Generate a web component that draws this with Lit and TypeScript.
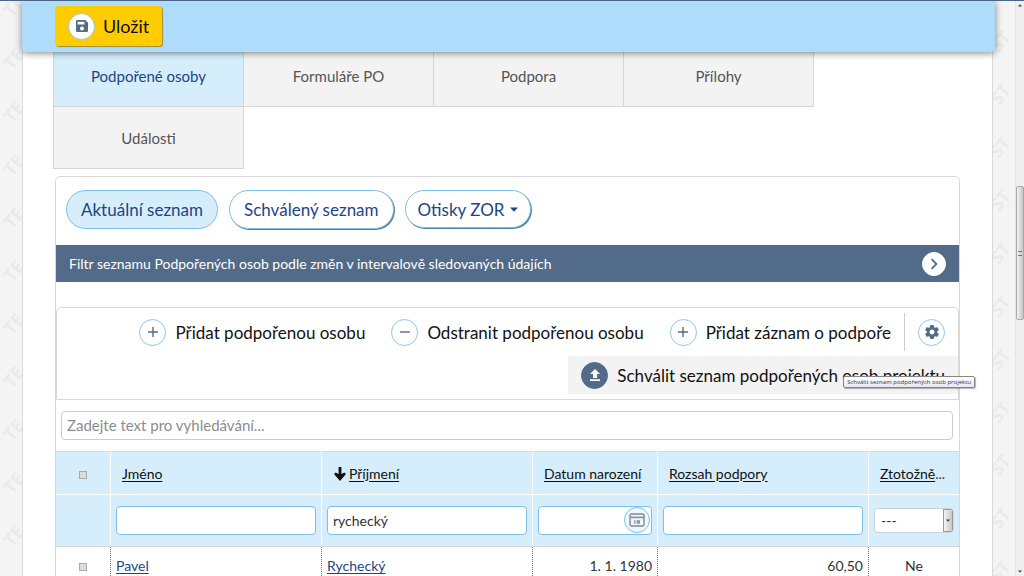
import { LitElement, html, css, svg } from "lit";
import { customElement, property } from "lit/decorators.js";

type IconName = "save" | "plus" | "minus" | "gear" | "upload" | "chevron" | "calendar" | "caret" | "arrow";

const ICONS: Record<IconName, { box: string; body: unknown }> = {
  save: {
    box: "0 0 14 14",
    body: svg`<path fill-rule="evenodd" d="M2.2 1H10.3L13 3.7V11.8A1.2 1.2 0 0 1 11.8 13H2.2A1.2 1.2 0 0 1 1 11.8V2.2A1.2 1.2 0 0 1 2.2 1ZM2.6 2.8V5.6H9.4V2.8ZM7 7.6A2 2 0 1 0 7 11.6A2 2 0 1 0 7 7.6Z"/>`,
  },
  plus: { box: "0 0 14 14", body: svg`<path d="M6.3 2H7.7V6.3H12V7.7H7.7V12H6.3V7.7H2V6.3H6.3Z"/>` },
  minus: { box: "0 0 14 14", body: svg`<path d="M2 6.3H12V7.7H2Z"/>` },
  gear: {
    box: "2 2 20 20",
    body: svg`<path d="M19.43 12.98c.04-.32.07-.64.07-.98s-.03-.66-.07-.98l2.11-1.65c.19-.15.24-.42.12-.64l-2-3.46c-.12-.22-.39-.3-.61-.22l-2.49 1c-.52-.4-1.08-.73-1.69-.98l-.38-2.65C14.46 2.18 14.25 2 14 2h-4c-.25 0-.46.18-.49.42l-.38 2.65c-.61.25-1.17.59-1.69.98l-2.49-1c-.23-.09-.49 0-.61.22l-2 3.46c-.13.22-.07.49.12.64l2.11 1.65c-.04.32-.07.65-.07.98s.03.66.07.98l-2.11 1.65c-.19.15-.24.42-.12.64l2 3.46c.12.22.39.3.61.22l2.49-1c.52.4 1.08.73 1.69.98l.38 2.65c.03.24.24.42.49.42h4c.25 0 .46-.18.49-.42l.38-2.65c.61-.25 1.17-.59 1.69-.98l2.49 1c.23.09.49 0 .61-.22l2-3.46c.12-.22.07-.49-.12-.64l-2.11-1.65zM12 15.5c-1.93 0-3.5-1.57-3.5-3.5s1.57-3.5 3.5-3.5 3.5 1.57 3.5 3.5-1.57 3.5-3.5 3.5z"/>`,
  },
  upload: { box: "0 0 14 14", body: svg`<path d="M7 1L12 6H9V10H5V6H2ZM2 11.2H12V13H2Z"/>` },
  chevron: { box: "0 0 14 14", body: svg`<path d="M4.6 2.2L9.4 7L4.6 11.8" fill="none" stroke="currentColor" stroke-width="1.8"/>` },
  calendar: {
    box: "0 0 16 14",
    body: svg`<rect x="1" y="1" width="14" height="12" rx="1.5" fill="none" stroke="currentColor" stroke-width="1.4"/><path d="M1 3.6H15V5.2H1ZM5 7.2H6.4V10.8H5ZM7.6 7.2H11V10.8H7.6Z" opacity=".85"/>`,
  },
  caret: { box: "0 0 8 5", body: svg`<path d="M0 .5H8L4 4.8Z"/>` },
  arrow: { box: "0 0 12 14", body: svg`<path d="M4.6 0H7.4V7L10.4 5.6L12 7L6 14L0 7L1.6 5.6L4.6 7Z"/>` },
};

@customElement("ui-icon")
export class UiIcon extends LitElement {
  static styles = css`
    :host { display: inline-flex; width: 14px; height: 14px; flex: none; vertical-align: -2px; }
    .glyph { width: 100%; height: 100%; fill: currentColor; display: block; }
  `;
  @property() name: IconName = "plus";
  render() {
    const icon = ICONS[this.name];
    return html`<svg class="glyph" viewBox=${icon.box} aria-hidden="true">${icon.body}</svg>`;
  }
}

@customElement("app-root")
export class AppRoot extends LitElement {
  static styles = css`
    :host {
      display: block;
      font-family: Lato, "Open Sans", sans-serif;
      font-size: 15px;
      color: #333;
    }
    * { box-sizing: border-box; }
    button, input, select { font: inherit; color: inherit; margin: 0; }
    button { cursor: pointer; }
    .window {
      display: flex;
      position: relative;
      height: 100vh;
      overflow: hidden;
      border-top: 1px solid #4a6583;
      background: #f4f4f4;
    }
    .gutter { width: 22px; flex: none; display: block; height: 100%; }
    .mark { font: bold 18px "Open Sans", sans-serif; fill: #eaeaea; }
    .page {
      flex: 1;
      min-width: 0;
      background: #fff;
      border: solid #d9d9d9;
      border-width: 0 1px;
    }
    .savebar {
      position: relative;
      z-index: 2;
      margin: 0 -3px 0 -1px;
      padding: 5px 33px 6px;
      background: #b0dcfb;
      border-radius: 0 0 4px 4px;
      box-shadow: 0 1px 7px rgba(0, 0, 0, 0.5);
    }
    .save {
      display: flex;
      align-items: center;
      gap: 8px;
      height: 40px;
      padding: 0 13px;
      border: 0;
      border-radius: 3px;
      background: #fc0;
      box-shadow: 1px 1px 1px #a58d2c;
      color: #111;
      font-size: 18px;
    }
    .disc {
      display: inline-flex;
      align-items: center;
      justify-content: center;
      flex: none;
      width: 27px;
      height: 27px;
      border: 1px solid #8cc6ef;
      border-radius: 50%;
      background: #fff;
      color: #526b89;
    }
    .disc.solid { background: #526b89; border-color: #526b89; color: #fff; }
    .disc.plain { width: 24px; height: 24px; padding: 0; border-color: #fff; }
    .body { padding: 0 32px 0 31px; }
    .tabs { display: flex; flex-wrap: wrap; margin: -7px 0 7px; }
    .tab {
      flex: 0 0 191px;
      height: 63px;
      margin: -1px 0 0 -1px;
      display: flex;
      align-items: center;
      justify-content: center;
      border: 1px solid #d5d5d5;
      background: #f3f3f3;
      color: #555;
      text-decoration: none;
    }
    .tab.current { background: #d6eefb; color: #1c4586; }
    .box { border: 1px solid #d8d8d8; border-radius: 5px; margin-left: 1px; }
    .pills { display: flex; align-items: flex-start; gap: 11px; padding: 13px 10px 16px; }
    .pill {
      display: flex;
      align-items: center;
      gap: 5px;
      height: 39px;
      padding: 0 14px;
      border: 1px solid #7cbfe9;
      border-radius: 20px;
      background: #fff;
      box-shadow: 1px 1px 0 #54809a;
      color: #1c4586;
      font-size: 17px;
    }
    .pill.on { background: #d6eefb; box-shadow: none; }
    .pill.menu { height: 38px; padding: 0 12px; }
    .small { width: 8px; height: 5px; }
    .filterbar {
      display: flex;
      align-items: center;
      justify-content: space-between;
      height: 37px;
      padding: 0 13px;
      background: #526b89;
      color: #fff;
      font-size: 14px;
    }
    .tools {
      display: flex;
      flex-wrap: wrap;
      justify-content: flex-end;
      margin-top: 25px;
      padding: 5px 0;
      border: 1px solid #d8d8d8;
      border-radius: 5px 5px 0 0;
    }
    .tool {
      position: relative;
      display: flex;
      align-items: center;
      gap: 9px;
      height: 38px;
      padding: 0 13px;
      border: 0;
      background: none;
      color: #111;
      font-size: 17px;
    }
    .tool.settings { border-left: 1px solid #ccc; }
    .tool.active { background: #f3f3f3; margin-top: 5px; }
    .tip {
      position: absolute;
      right: -17px;
      bottom: 6px;
      padding: 0 3px;
      border: 1px solid #858585;
      border-radius: 2px;
      background: linear-gradient(#fff, #e6e7f1);
      box-shadow: 1px 1px 1px rgba(0, 0, 0, 0.3);
      font-family: "Open Sans", sans-serif;
      font-size: 6px;
      line-height: 10px;
      color: #333;
      white-space: nowrap;
    }
    .search { padding: 11px 6px 11px 5px; }
    .field {
      display: block;
      width: 100%;
      height: 29px;
      padding: 0 5px 1px;
      border: 1px solid #7cbfe9;
      border-radius: 4px;
      background: #fff;
      outline: none;
    }
    .search .field { border-color: #ccc; }
    .field::placeholder { color: #8c8c8c; opacity: 1; }
    .grid { width: 100%; table-layout: fixed; border-collapse: separate; border-spacing: 0; font-size: 14px; }
    .c-check { width: 55px; }
    .c-date { width: 125px; }
    .c-match { width: 90px; }
    .grid th {
      height: 44px;
      padding: 0 11px;
      background: #d6eefb;
      border: solid #fff;
      border-width: 0 1px 1px 0;
      font-weight: normal;
      text-align: left;
      white-space: nowrap;
    }
    .grid th:last-child, .grid .filters td:last-child { border-right: 0; }
    .grid .head th { border-top: 1px solid #d8d8d8; }
    .head a { color: #111; text-underline-offset: 2px; }
    .head ui-icon { color: #111; margin-right: 2px; }
    .filters td {
      height: 52px;
      padding: 0 5px;
      background: #d6eefb;
      border: solid #fff;
      border-width: 0 1px 0 0;
      border-bottom: 1px solid #d0d4d6;
    }
    .row td { height: 37px; padding: 0 5px; border-right: 1px dotted #777; }
    .row td:last-child { border-right: 0; }
    .row a { color: #1c4586; text-underline-offset: 2px; }
    .grid .mid { text-align: center; }
    .num { text-align: right; }
    .tick {
      appearance: none;
      width: 8px;
      height: 8px;
      border: 1px solid #aaa;
      background: #dcdcdc;
      vertical-align: middle;
    }
    .date { position: relative; }
    .pick {
      position: absolute;
      right: 2px;
      top: 1px;
      width: 26px;
      height: 26px;
      padding: 0;
      display: flex;
      align-items: center;
      justify-content: center;
      border: 1px solid #7cbfe9;
      border-radius: 50%;
      background: #eef8fe;
      color: #7d8896;
    }
    .pick ui-icon { width: 16px; }
    .choice {
      display: flex;
      height: 25px;
      border: 1px solid #c9d5dc;
      border-radius: 4px;
      background: #fff;
      overflow: hidden;
    }
    .select { appearance: none; flex: 1; min-width: 0; border: 0; padding: 0 6px; background: none; outline: none; }
    .drop {
      width: 10px;
      display: flex;
      align-items: center;
      justify-content: center;
      border: 1px solid #999;
      background: linear-gradient(90deg, #f3f3f3, #c9c9c9);
    }
    .tiny { width: 4px; height: 3px; }
    .side { flex: none; display: flex; }
    .scroll {
      flex: none;
      width: 9px;
      display: grid;
      grid-template-rows: 185fr 134fr 256fr;
      background: #efefef;
      border-left: 1px solid #e2e2e2;
      color: #444;
    }
    .cap { display: flex; justify-content: center; padding: 3px 0; }
    .cap.end { align-items: flex-end; }
    .flip { transform: rotate(180deg); }
    .thumb {
      display: flex;
      align-items: center;
      justify-content: center;
      border: 1px solid #a9a9a9;
      border-radius: 2px;
      background: linear-gradient(90deg, #f4f4f4, #c4c4c4);
    }
    .grip { width: 4px; height: 5px; border: solid #777; border-width: 1px 0; }
  `;

  private tabs = ["Podpořené osoby", "Formuláře PO", "Podpora", "Přílohy", "Události"];

  private watermark(id: string, x: number, y: number) {
    return html`<svg class="gutter" aria-hidden="true">
      <defs>
        <pattern id=${id} width="22" height="53" patternUnits="userSpaceOnUse" y=${y}>
          <text class="mark" x="0" y="0" transform="translate(${x} 50) rotate(-50)">${id === "left" ? "TE" : "ST"}</text>
        </pattern>
      </defs>
      <rect width="100%" height="100%" fill="url(#${id})"></rect>
    </svg>`;
  }

  render() {
    return html`
      <div class="window">
        ${this.watermark("left", 12, 20)}
        <main class="page">
          <div class="savebar">
            <button class="save"><span class="disc"><ui-icon name="save"></ui-icon></span>Uložit</button>
          </div>
          <div class="body">
            <nav class="tabs">
              ${this.tabs.map((t, i) => html`<a class="tab ${i === 0 ? "current" : ""}" href="#">${t}</a>`)}
            </nav>
            <section class="box">
              <div class="pills">
                <button class="pill on">Aktuální seznam</button>
                <button class="pill">Schválený seznam</button>
                <button class="pill menu">Otisky ZOR<ui-icon class="small" name="caret"></ui-icon></button>
              </div>
              <div class="filterbar">
                <span>Filtr seznamu Podpořených osob podle změn v intervalově sledovaných údajích</span>
                <button class="disc plain" aria-label="Rozbalit"><ui-icon name="chevron"></ui-icon></button>
              </div>
              <div class="tools">
                <button class="tool"><span class="disc"><ui-icon name="plus"></ui-icon></span>Přidat podpořenou osobu</button>
                <button class="tool"><span class="disc"><ui-icon name="minus"></ui-icon></span>Odstranit podpořenou osobu</button>
                <button class="tool"><span class="disc"><ui-icon name="plus"></ui-icon></span>Přidat záznam o podpoře</button>
                <button class="tool settings" aria-label="Nastavení"><span class="disc"><ui-icon name="gear"></ui-icon></span></button>
                <button class="tool active">
                  <span class="disc solid"><ui-icon name="upload"></ui-icon></span>Schválit seznam podpořených osob projektu
                  <span class="tip" role="tooltip">Schválit seznam podpořených osob projektu</span>
                </button>
              </div>
              <div class="search">
                <input class="field" type="search" autofocus aria-label="Vyhledávání" placeholder="Zadejte text pro vyhledávání..." />
              </div>
              <table class="grid">
                <colgroup>
                  <col class="c-check" /><col /><col /><col class="c-date" /><col /><col class="c-match" />
                </colgroup>
                <thead>
                  <tr class="head">
                    <th class="mid"><input class="tick" type="checkbox" aria-label="Vybrat vše" /></th>
                    <th><a href="#">Jméno</a></th>
                    <th><ui-icon name="arrow"></ui-icon><a href="#">Příjmení</a></th>
                    <th><a href="#">Datum narození</a></th>
                    <th><a href="#">Rozsah podpory</a></th>
                    <th><a href="#">Ztotožně</a>...</th>
                  </tr>
                  <tr class="filters">
                    <td></td>
                    <td><input class="field" aria-label="Jméno" /></td>
                    <td><input class="field" aria-label="Příjmení" .value=${"rychecký"} /></td>
                    <td>
                      <div class="date">
                        <input class="field" aria-label="Datum narození" />
                        <button class="pick" aria-label="Kalendář"><ui-icon name="calendar"></ui-icon></button>
                      </div>
                    </td>
                    <td><input class="field" aria-label="Rozsah podpory" /></td>
                    <td>
                      <div class="choice">
                        <select class="select" aria-label="Ztotožněno"><option>---</option></select>
                        <span class="drop"><ui-icon class="tiny" name="caret"></ui-icon></span>
                      </div>
                    </td>
                  </tr>
                </thead>
                <tbody>
                  <tr class="row">
                    <td class="mid"><input class="tick" type="checkbox" aria-label="Vybrat řádek" /></td>
                    <td><a href="#">Pavel</a></td>
                    <td><a href="#">Rychecký</a></td>
                    <td class="num">1. 1. 1980</td>
                    <td class="num">60,50</td>
                    <td class="mid">Ne</td>
                  </tr>
                </tbody>
              </table>
            </section>
          </div>
        </main>
        <div class="side">
          ${this.watermark("right", 6, 2)}
          <div class="scroll">
            <span class="cap"><ui-icon class="tiny flip" name="caret"></ui-icon></span>
            <span class="thumb"><span class="grip"></span></span>
            <span class="cap end"><ui-icon class="tiny" name="caret"></ui-icon></span>
          </div>
        </div>
      </div>
    `;
  }
}
